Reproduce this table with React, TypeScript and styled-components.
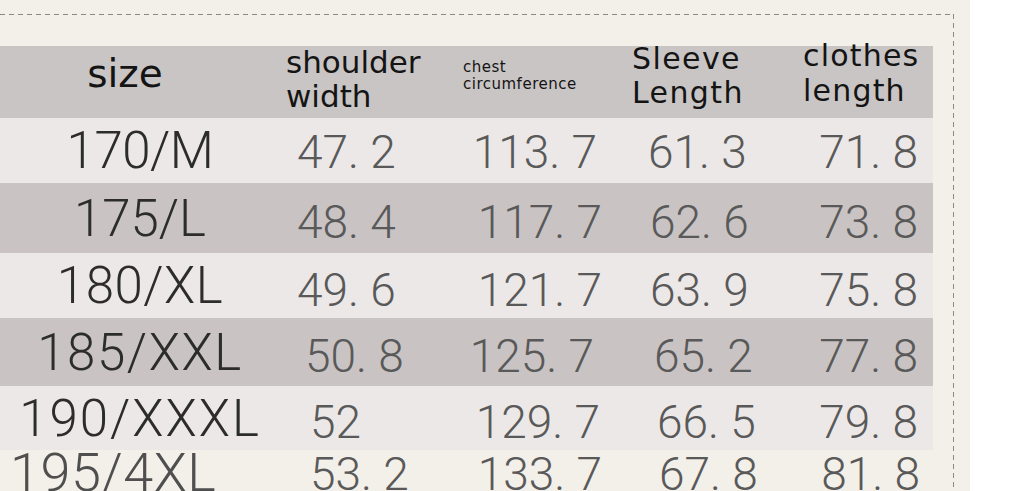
import React from "react";
import styled, { createGlobalStyle } from "styled-components";

const GlobalStyle = createGlobalStyle`
  html, body {
    margin: 0;
    padding: 0;
    background: #ffffff;
  }
  body {
    font-family: "DejaVu Sans", sans-serif;
  }
`;

const columns = "280px 175px 165px 170px 143px";

type Row = {
  label: string;
  values: string[];
  height: number;
  tone: "light" | "dark" | "none";
  nudge: number;
  spread: number;
  pads: number[];
  last?: boolean;
};

const rows: Row[] = [
  { label: "170/M", values: ["47. 2", "113. 7", "61. 3", "71. 8"], height: 65, tone: "light", nudge: 2, spread: -0.5, pads: [17, 23, 28, 15] },
  { label: "175/L", values: ["48. 4", "117. 7", "62. 6", "73. 8"], height: 70, tone: "dark", nudge: 8, spread: 0, pads: [17, 18, 30, 15] },
  { label: "180/XL", values: ["49. 6", "121. 7", "63. 9", "75. 8"], height: 65, tone: "light", nudge: 8, spread: 0.5, pads: [17, 18, 30, 15] },
  { label: "185/XXL", values: ["50. 8", "125. 7", "65. 2", "77. 8"], height: 68, tone: "dark", nudge: 8, spread: 1.6, pads: [25, 26, 34, 15] },
  { label: "190/XXXL", values: ["52", "129. 7", "66. 5", "79. 8"], height: 64, tone: "light", nudge: 8, spread: 2, pads: [30, 20, 37, 15] },
  { label: "195/4XL", values: ["53. 2", "133. 7", "67. 8", "81. 8"], height: 60, tone: "none", nudge: 0, spread: 0.5, pads: [30, 18, 39, 13], last: true },
];

const tones = {
  light: "#ece8e7",
  dark: "#c9c4c3",
  none: "transparent",
};

function App() {
  return (
    <Page>
      <GlobalStyle />
      <Sheet>
        <Frame>
          <Table>
            <HeadRow>
              <HeadCell $size={39} $lh={39} $top={8} $align="center" $pad={30}>
                size
              </HeadCell>
              <HeadCell $size={31} $lh={34} $top={-1} $pad={6}>
                shoulder
                <br />
                width
              </HeadCell>
              <HeadCell $size={15} $lh={17} $top={13} $pad={8} $ls={0.5}>
                chest
                <br />
                circumference
              </HeadCell>
              <HeadCell $size={30} $lh={34} $top={-4} $pad={12} $ls={1.4}>
                Sleeve
                <br />
                Length
              </HeadCell>
              <HeadCell $size={30} $lh={35} $top={-8} $pad={13} $ls={1.2}>
                clothes
                <br />
                length
              </HeadCell>
            </HeadRow>
            {rows.map((row) => (
              <DataRow
                key={row.label}
                $height={row.height}
                $bg={tones[row.tone]}
                $last={row.last}
              >
                <SizeLabel $last={row.last} $spread={row.spread}>
                  {row.label}
                </SizeLabel>
                <Value $side="left" $pad={row.pads[0]} $nudge={row.nudge} $last={row.last}>
                  {row.values[0]}
                </Value>
                <Value $side="right" $pad={row.pads[1]} $nudge={row.nudge} $last={row.last}>
                  {row.values[1]}
                </Value>
                <Value $side="left" $pad={row.pads[2]} $nudge={row.nudge} $last={row.last}>
                  {row.values[2]}
                </Value>
                <Value $side="right" $pad={row.pads[3]} $nudge={row.nudge} $last={row.last}>
                  {row.values[3]}
                </Value>
              </DataRow>
            ))}
          </Table>
        </Frame>
      </Sheet>
    </Page>
  );
}

const Page = styled.div`
  display: flex;
  width: 1024px;
  height: 491px;
  overflow: hidden;
  background: #ffffff;
`;

const Sheet = styled.div`
  width: 970px;
  height: 100%;
  padding-top: 14px;
  box-sizing: border-box;
  background: #f3efe9;
`;

const Frame = styled.div`
  width: 954px;
  height: 100%;
  padding-top: 32px;
  box-sizing: border-box;
  background-image: linear-gradient(to right, #8c8a88 60%, transparent 0),
    linear-gradient(to bottom, #8c8a88 60%, transparent 0);
  background-position: left top, right top;
  background-size: 9px 1px, 1px 9px;
  background-repeat: repeat-x, repeat-y;
`;

const Table = styled.div`
  width: 933px;
  display: flex;
  flex-direction: column;
`;

const HeadRow = styled.div`
  display: grid;
  grid-template-columns: ${columns};
  height: 72px;
  align-items: start;
  background: #c9c5c4;
`;

const HeadCell = styled.div<{
  $size: number;
  $lh: number;
  $top: number;
  $pad: number;
  $align?: "left" | "center";
  $ls?: number;
}>`
  font-family: "DejaVu Sans", sans-serif;
  color: #141414;
  font-size: ${(p) => p.$size}px;
  line-height: ${(p) => p.$lh}px;
  letter-spacing: ${(p) => p.$ls ?? 0}px;
  margin-top: ${(p) => p.$top}px;
  text-align: ${(p) => p.$align ?? "left"};
  ${(p) => (p.$align === "center" ? `padding-right: ${p.$pad}px;` : `padding-left: ${p.$pad}px;`)}
  white-space: nowrap;
`;

const DataRow = styled.div<{ $height: number; $bg: string; $last?: boolean }>`
  display: grid;
  grid-template-columns: ${columns};
  height: ${(p) => p.$height}px;
  align-items: ${(p) => (p.$last ? "start" : "center")};
  background: ${(p) => p.$bg};
`;

const SizeLabel = styled.div<{ $last?: boolean; $spread: number }>`
  font-family: Roboto, "Liberation Sans", sans-serif;
  font-weight: 300;
  font-size: ${(p) => (p.$last ? 54 : 51)}px;
  line-height: 1;
  letter-spacing: ${(p) => p.$spread}px;
  color: ${(p) => (p.$last ? "#4f4f4f" : "#2c2c2c")};
  text-align: ${(p) => (p.$last ? "left" : "center")};
  padding-left: ${(p) => (p.$last ? 10 : 0)}px;
  margin-top: ${(p) => (p.$last ? -4 : 0)}px;
  white-space: nowrap;
`;

const Value = styled.div<{ $side: "left" | "right"; $pad: number; $nudge: number; $last?: boolean }>`
  font-family: Roboto, "Liberation Sans", sans-serif;
  font-weight: 300;
  font-size: 46px;
  line-height: 1;
  color: #595959;
  text-align: ${(p) => p.$side};
  ${(p) => (p.$side === "left" ? `padding-left: ${p.$pad}px;` : `padding-right: ${p.$pad}px;`)}
  padding-top: ${(p) => p.$nudge}px;
  margin-top: ${(p) => (p.$last ? 1 : 0)}px;
  white-space: pre;
`;

export default App;
